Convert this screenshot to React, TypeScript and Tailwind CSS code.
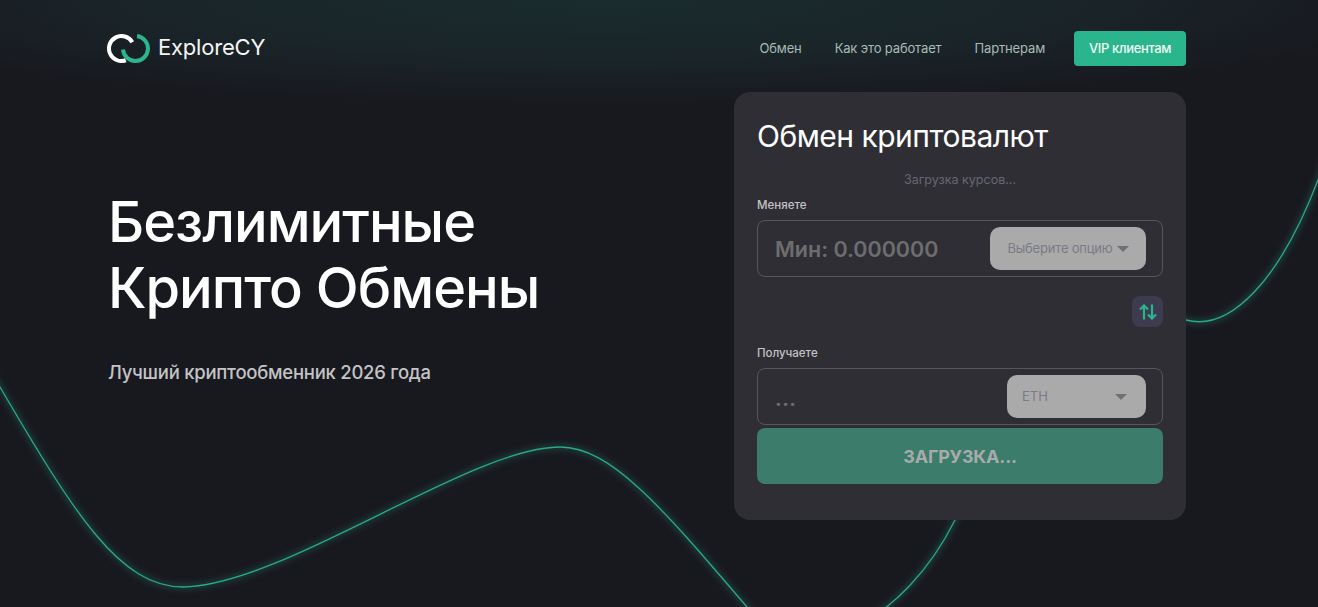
const WAVE =
  "M-10 370 L0 387 C75 515 120 587 183 587 C285 585 470 447 560 447 C610 447 660 505 747 607 C807 676 905 620 955 520 C1000 430 1126 304 1186 320 C1230 332 1280 280 1318 180 L1330 145"

function Logo() {
  return (
    <svg width="44" height="29" viewBox="0 0 44 29" fill="none" strokeWidth="4" className="-ml-[1px]">
      <path d="M25.3 8.25A12.5 12.5 0 1 0 18.8 26.25" stroke="#ffffff" />
      <path d="M30 2.1A12.5 12.5 0 1 1 16 15.5" stroke="#2bb58c" />
    </svg>
  )
}

function Caret() {
  return (
    <svg width="12" height="6" viewBox="0 0 12 6" className="shrink-0">
      <path d="M0 0h12L6 6z" fill="#6f6f78" />
    </svg>
  )
}

export default function App() {
  return (
    <div className="relative h-[607px] w-full overflow-hidden bg-[#18191f] font-['Inter',sans-serif] text-white">
      <div className="absolute inset-x-0 top-0 h-[105px] bg-[radial-gradient(ellipse_62%_100%_at_46%_0%,#1a2c2d_0%,#1a2529_55%,#18191f_100%)]" />
      <svg className="absolute inset-0" width="1318" height="607" fill="none">
        <path d={WAVE} stroke="#2bb58c" strokeWidth="4" opacity="0.32" className="blur-[3px]" />
        <path d={WAVE} stroke="#2ba98a" strokeWidth="1.3" />
      </svg>

      <div className="relative ml-[108px] w-[1078px]">
        <header className="flex h-[92px] items-center justify-between pt-[5px]">
          <div className="flex items-center gap-[7px]">
            <Logo />
            <span className="pb-[3px] text-[22px] leading-none tracking-[-0.2px] text-[#f4f5f5]">ExploreCY</span>
          </div>
          <nav className="flex items-center gap-[33px] text-[13px] tracking-[-0.15px] text-[#a6bcb5]">
            <a>Обмен</a>
            <a>Как это работает</a>
            <a>Партнерам</a>
            <a className="-ml-[4px] flex h-[35px] w-[112px] items-center justify-center rounded-[4px] bg-[#2bb58c] font-medium tracking-[-0.35px] text-[#eef8f5]">VIP клиентам</a>
          </nav>
        </header>

        <main className="flex items-start justify-between">
          <section className="pt-[97px]">
            <h1 className="text-[56px] leading-[66px] font-[450] tracking-[-1px]">Безлимитные<br />Крипто Обмены</h1>
            <p className="mt-[38px] text-[18.5px] font-medium tracking-[-0.25px] text-[#c4c4c6]">Лучший криптообменник 2026 года</p>
          </section>

          <section className="h-[428px] w-[452px] rounded-[16px] bg-[#2f2e35] px-[23px] pt-[24px]">
            <h2 className="text-[30px] leading-[40px] font-normal tracking-[-0.5px]">Обмен криптовалют</h2>
            <p className="mt-[15px] text-center text-[12.5px] leading-[18px] text-[#666773]">Загрузка курсов...</p>
            <div className="mt-[8px] text-[11.5px] leading-[16px] font-medium text-[#c4c4c6]">Меняете</div>
            <div className="mt-[7px] flex h-[57px] items-center justify-between rounded-[8px] border border-[#55575c] pr-[16px] pl-[17px]">
              <span className="pt-[1px] text-[21.5px] font-semibold text-[#6d6d6f]">Мин: 0.000000</span>
              <div className="flex h-[43px] w-[156px] items-center justify-center gap-[4px] rounded-[10px] bg-[#aaaaab] text-[13px] tracking-[-0.2px] text-[#7b7b85]">
                Выберите опцию <Caret />
              </div>
            </div>
            <div className="mt-[19px] flex justify-end">
              <div className="flex h-[31px] w-[31px] items-center justify-center rounded-[8px] bg-[#3d3b4f]">
                <svg width="18" height="16" viewBox="0 0 18 16" fill="none" stroke="#2bb58c" strokeWidth="2.2">
                  <path d="M5 15.5V1.5M1 5.5l4-4 4 4M13 .5v14M9 10.5l4 4 4-4" />
                </svg>
              </div>
            </div>
            <div className="mt-[18px] text-[11.5px] leading-[16px] font-medium text-[#c4c4c6]">Получаете</div>
            <div className="mt-[7px] flex h-[57px] items-center justify-between rounded-[8px] border border-[#55575c] pr-[16px] pl-[17px]">
              <span className="pt-[4px] text-[20px] leading-none font-bold tracking-[0.5px] text-[#6d6d6f]">...</span>
              <div className="flex h-[43px] w-[139px] items-center justify-between rounded-[10px] bg-[#aaaaab] pr-[19px] pl-[15px] text-[13px] text-[#7b7b85]">
                ETH <Caret />
              </div>
            </div>
            <div className="mt-[3px] flex h-[56px] items-center justify-center rounded-[8px] bg-[#3b7c6a] text-[18px] font-bold tracking-[-0.2px] text-[#a9aaac]">ЗАГРУЗКА...</div>
          </section>
        </main>
      </div>
    </div>
  )
}
